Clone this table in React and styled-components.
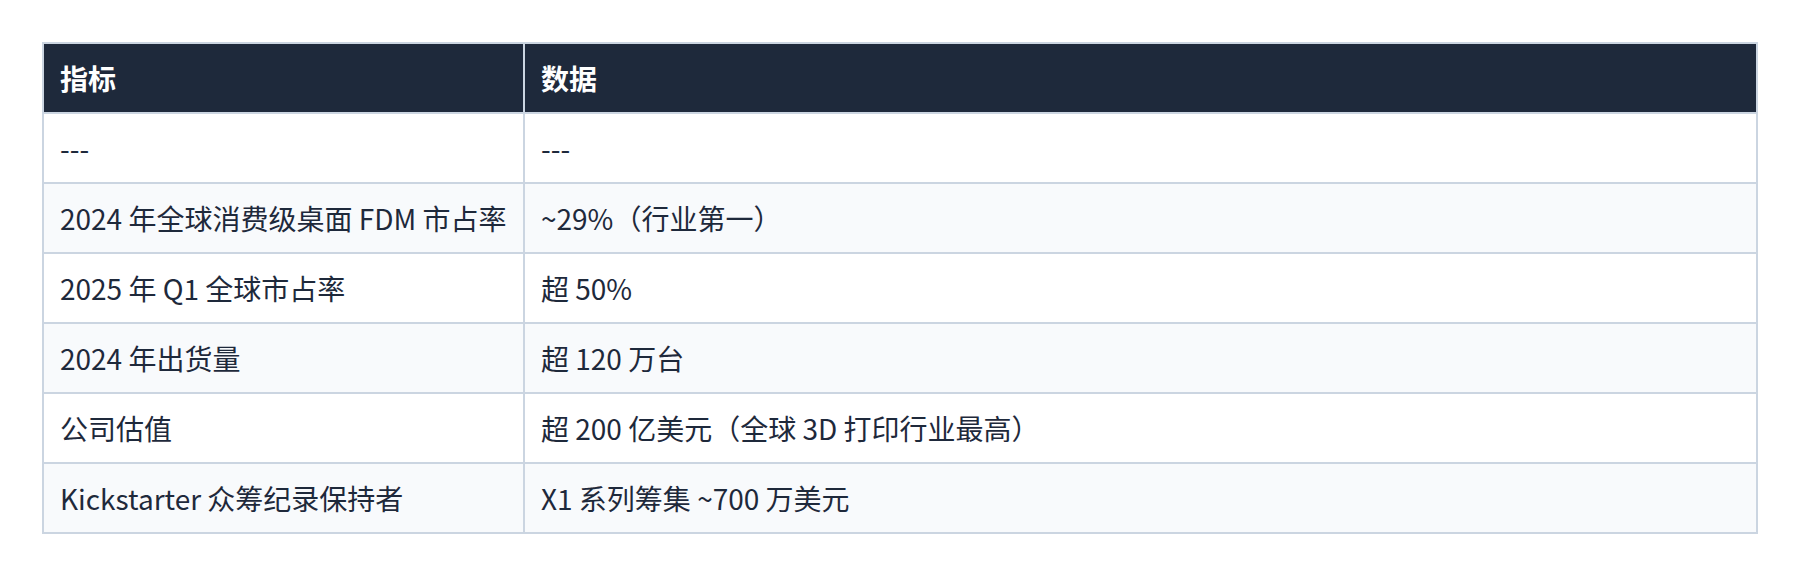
import React from "react";
import styled, { createGlobalStyle } from "styled-components";

const GlobalStyle = createGlobalStyle`
  html, body {
    margin: 0;
    padding: 0;
    background: #ffffff;
  }
  body {
    font-family: "Noto Sans CJK SC", "Noto Sans", sans-serif;
    color: #1e293b;
  }
`;

const Page = styled.div`
  padding: 42px;
`;

const Table = styled.table`
  width: 100%;
  border-collapse: collapse;
  table-layout: fixed;
  font-size: 28px;
  line-height: 42px;
`;

const FirstCol = styled.col`
  width: 481px;
`;

const HeadCell = styled.th`
  background: #1e293b;
  color: #ffffff;
  font-weight: 700;
  text-align: left;
  padding: 13px 16px;
  border: 2px solid #cbd5e1;
`;

const Row = styled.tr`
  background: ${(p) => (p.$alt ? "#f8fafc" : "#ffffff")};
`;

const Cell = styled.td`
  padding: 13px 16px;
  border: 2px solid #cbd5e1;
  white-space: nowrap;
`;

const rows = [
  ["---", "---"],
  ["2024 年全球消费级桌面 FDM 市占率", "~29%（行业第一）"],
  ["2025 年 Q1 全球市占率", "超 50%"],
  ["2024 年出货量", "超 120 万台"],
  ["公司估值", "超 200 亿美元（全球 3D 打印行业最高）"],
  ["Kickstarter 众筹纪录保持者", "X1 系列筹集 ~700 万美元"],
];

export default function App() {
  return (
    <>
      <GlobalStyle />
      <Page>
        <Table>
          <colgroup>
            <FirstCol />
            <col />
          </colgroup>
          <thead>
            <tr>
              <HeadCell>指标</HeadCell>
              <HeadCell>数据</HeadCell>
            </tr>
          </thead>
          <tbody>
            {rows.map(([k, v], i) => (
              <Row key={i} $alt={i % 2 === 1}>
                <Cell>{k}</Cell>
                <Cell>{v}</Cell>
              </Row>
            ))}
          </tbody>
        </Table>
      </Page>
    </>
  );
}
